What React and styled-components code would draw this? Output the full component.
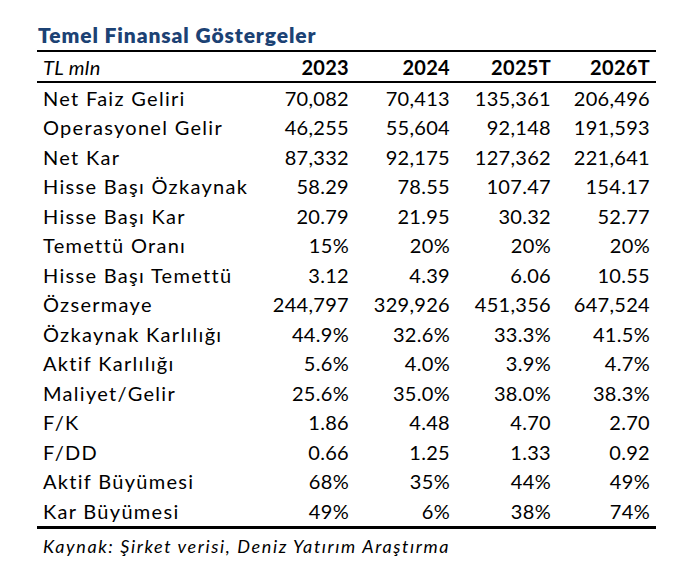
import React from 'react';
import styled, { createGlobalStyle } from 'styled-components';

const GlobalStyle = createGlobalStyle`
  body {
    margin: 0;
    background: #ffffff;
    font-family: Lato, "Open Sans", sans-serif;
    color: #000000;
  }
`;

const Page = styled.div`
  padding: 22px 0 0 37px;
  width: 619px;
`;

const Title = styled.h1`
  margin: 0 0 3px 1px;
  font-size: 21px;
  font-weight: 800;
  line-height: 25px;
  letter-spacing: 0.9px;
  color: #1c4274;
`;

const Table = styled.div`
  border-top: 2px solid #000000;
  border-bottom: 3px solid #000000;
`;

const Row = styled.div`
  display: grid;
  grid-template-columns: 217px 101px 101px 101px 99px;
  align-items: center;
  height: ${(p) => (p.$head ? '29px' : '29.53px')};
  border-bottom: ${(p) => (p.$head ? '2px solid #000000' : 'none')};
  font-size: 20px;
`;

const Label = styled.div`
  padding-left: 6px;
  letter-spacing: ${(p) => (p.$italic ? '0.4px' : '1.3px')};
  font-style: ${(p) => (p.$italic ? 'italic' : 'normal')};
  white-space: nowrap;
`;

const Cell = styled.div`
  text-align: right;
  padding-right: 6px;
  letter-spacing: 0.3px;
  font-weight: ${(p) => (p.$bold ? 700 : 400)};
`;

const Note = styled.div`
  margin-top: 6px;
  padding-left: 6px;
  font-size: 18px;
  font-style: italic;
  letter-spacing: 1.6px;
`;

const years = ['2023', '2024', '2025T', '2026T'];

const rows = [
  ['Net Faiz Geliri', '70,082', '70,413', '135,361', '206,496'],
  ['Operasyonel Gelir', '46,255', '55,604', '92,148', '191,593'],
  ['Net Kar', '87,332', '92,175', '127,362', '221,641'],
  ['Hisse Başı Özkaynak', '58.29', '78.55', '107.47', '154.17'],
  ['Hisse Başı Kar', '20.79', '21.95', '30.32', '52.77'],
  ['Temettü Oranı', '15%', '20%', '20%', '20%'],
  ['Hisse Başı Temettü', '3.12', '4.39', '6.06', '10.55'],
  ['Özsermaye', '244,797', '329,926', '451,356', '647,524'],
  ['Özkaynak Karlılığı', '44.9%', '32.6%', '33.3%', '41.5%'],
  ['Aktif Karlılığı', '5.6%', '4.0%', '3.9%', '4.7%'],
  ['Maliyet/Gelir', '25.6%', '35.0%', '38.0%', '38.3%'],
  ['F/K', '1.86', '4.48', '4.70', '2.70'],
  ['F/DD', '0.66', '1.25', '1.33', '0.92'],
  ['Aktif Büyümesi', '68%', '35%', '44%', '49%'],
  ['Kar Büyümesi', '49%', '6%', '38%', '74%'],
];

export default function App() {
  return (
    <Page>
      <GlobalStyle />
      <Title>Temel Finansal Göstergeler</Title>
      <Table>
        <Row $head>
          <Label $italic>TL mln</Label>
          {years.map((y) => (
            <Cell key={y} $bold>
              {y}
            </Cell>
          ))}
        </Row>
        {rows.map(([label, ...values]) => (
          <Row key={label}>
            <Label>{label}</Label>
            {values.map((v, i) => (
              <Cell key={i}>{v}</Cell>
            ))}
          </Row>
        ))}
      </Table>
      <Note>Kaynak: Şirket verisi, Deniz Yatırım Araştırma</Note>
    </Page>
  );
}
